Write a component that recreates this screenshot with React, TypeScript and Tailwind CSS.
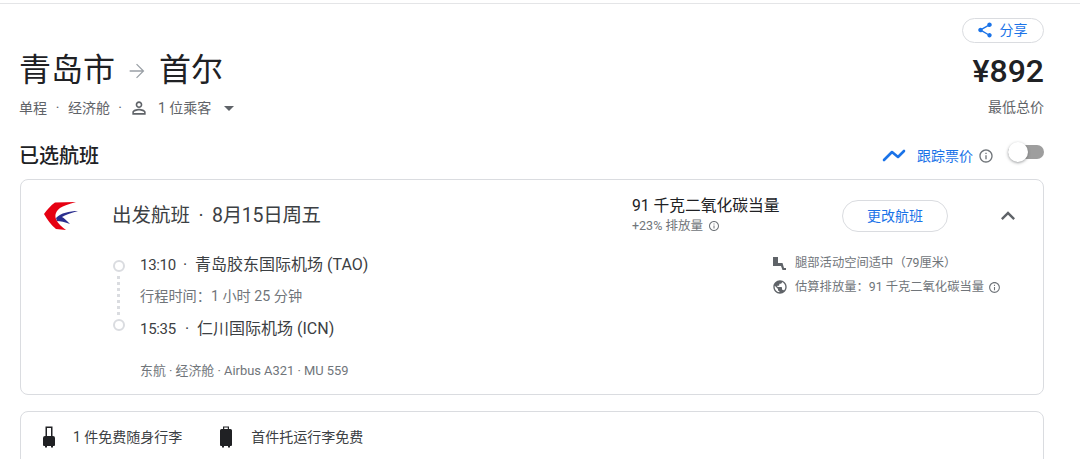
import React from "react";

const font = { fontFamily: '"Roboto","Noto Sans CJK SC",sans-serif' };

function Info({ size = 14, color = "#70757a" }: { size?: number; color?: string }) {
  return (
    <svg width={size} height={size} viewBox="0 0 24 24" fill={color} className="shrink-0">
      <path d="M11 7h2v2h-2zm0 4h2v6h-2zm1-9C6.480 2 2 6.480 2 12s4.480 10 10 10 10-4.480 10-10S17.520 2 12 2zm0 18c-4.410 0-8-3.590-8-8s3.590-8 8-8 8 3.590 8 8-3.590 8-8 8z" />
    </svg>
  );
}

function Logo() {
  return (
    <svg width="36" height="30" viewBox="0 0 36 30" className="-ml-px shrink-0">
      <path d="M0 13C3 9 7 4 11 1.500L32 1C25 3 19 5 16 7 12 10 10.500 14 12 18 14 23 18 26 22 29L12 28C7 24 3 18 0 13Z" fill="#e60012" />
      <path d="M12 17C17 12 25 10 34 10 27 12 21 14 18 16 20 17 23 20 26 23 21 21 16 20 13 20Z" fill="#2b2f8f" />
    </svg>
  );
}

export default function App() {
  return (
    <div style={font} className="h-[459px] w-[1080px] overflow-hidden bg-white pl-5 pr-9 pt-[3px] text-[#202124]">
      <div className="-ml-5 -mr-9 h-px bg-[#e4e5e7]" />
      <div className="flex justify-between pt-[15px]">
        <div className="flex flex-col">
          <div className="mt-[30px] -ml-px flex h-[43px] items-center text-[32px] leading-[43px]">
            <span>青岛市</span>
            <svg width="22" height="22" viewBox="0 0 24 24" fill="#9aa0a6" className="ml-[11px] mr-[11px]">
              <path d="M12 4l-1 1 6.200 6.300H4v1.400h13.200L11 19l1 1 8-8z" />
            </svg>
            <span>首尔</span>
          </div>
          <div className="mt-[6px] -ml-px flex h-5 items-center text-sm leading-5 text-[#5f6368]">
            <span>单程</span>
            <span className="w-[21px] text-center">·</span>
            <span>经济舱</span>
            <span className="w-[20px] text-center">·</span>
            <svg width="20" height="20" viewBox="0 0 24 24" fill="#5f6368" className="ml-[-1px] mr-[9px]">
              <path d="M12 5.900a2.100 2.100 0 1 1 0 4.200 2.100 2.100 0 0 1 0-4.200m0 9c2.970 0 6.100 1.460 6.100 2.100v1.100H5.900V17c0-.64 3.130-2.100 6.100-2.100M12 4C9.790 4 8 5.790 8 8s1.790 4 4 4 4-1.790 4-4-1.790-4-4-4zm0 9c-2.670 0-8 1.340-8 4v3h16v-3c0-2.660-5.330-4-8-4z" />
            </svg>
            <span>1 位乘客</span>
            <svg width="10" height="5" viewBox="0 0 10 5" fill="#5f6368" className="ml-[13px]">
              <path d="M0 0l5 5 5-5z" />
            </svg>
          </div>
        </div>
        <div className="flex flex-col items-end">
          <div className="-mt-px flex h-[25px] w-[82px] items-center justify-center gap-[6px] rounded-full border border-[#dadce0] pb-px text-sm leading-5 text-[#1a73e8]">
            <svg width="18" height="18" viewBox="0 0 24 24" fill="#1a73e8" className="ml-[-3px]">
              <path d="M18 16.080c-.76 0-1.440.3-1.960.77L8.910 12.700c.05-.23.090-.46.090-.7s-.04-.47-.09-.7l7.050-4.110c.54.5 1.250.81 2.040.81 1.660 0 3-1.340 3-3s-1.340-3-3-3-3 1.340-3 3c0 .24.04.47.09.7L8.040 9.810C7.500 9.310 6.790 9 6 9c-1.660 0-3 1.340-3 3s1.340 3 3 3c.79 0 1.500-.31 2.040-.81l7.120 4.160c-.05.21-.08.43-.08.65 0 1.610 1.310 2.920 2.920 2.920s2.920-1.310 2.920-2.920-1.310-2.920-2.920-2.920z" />
            </svg>
            <span>分享</span>
          </div>
          <div className="mt-[8px] text-[32px] font-medium leading-[40px]">¥892</div>
          <div className="mt-[6px] text-sm leading-5 text-[#5f6368]">最低总价</div>
        </div>
      </div>

      <div className="mt-[24px] flex h-7 items-center justify-between">
        <h2 className="-ml-px text-xl leading-7 [font-weight:450]">已选航班</h2>
        <div className="flex items-center">
          <svg width="24" height="24" viewBox="0 0 24 24" fill="none" stroke="#1a73e8" strokeWidth="2.600" strokeLinejoin="round" strokeLinecap="round" className="mr-[11px]">
            <path d="M2 16l8-8 6 5 6-6" />
          </svg>
          <span className="text-sm leading-5 text-[#1a73e8]">跟踪票价</span>
          <span className="ml-[5px] mr-[14px]"><Info size={16} /></span>
          <div className="relative -mt-[9px] h-[14px] w-[36px] rounded-full bg-[#9e9e9e]">
            <div className="absolute left-0 top-[-3px] h-5 w-5 rounded-full bg-white shadow-[0_1px_3px_rgba(60,64,67,0.5)]" />
          </div>
        </div>
      </div>

      <div className="mt-[9px] h-[216px] rounded-lg border border-[#dadce0]">
        <div className="mb-px flex h-[71px] items-center">
          <div className="ml-[24px] w-[68px]"><Logo /></div>
          <div className="-ml-px flex w-[520px] text-[19.5px] leading-6 text-[#3c4043]">
            <span>出发航班</span>
            <span className="w-[22px] text-center">·</span>
            <span className="tracking-[-0.3px]">8月15日周五</span>
          </div>
          <div className="flex w-[210px] flex-col gap-[2px] pb-[2px]">
            <div className="text-[15.75px] leading-5">91 千克二氧化碳当量</div>
            <div className="flex items-center gap-[5px] text-[12.5px] leading-4 text-[#70757a]">
              <span>+23% 排放量</span>
              <Info size={12} />
            </div>
          </div>
          <div className="flex h-8 w-[106px] items-center justify-center rounded-full border border-[#dadce0] text-sm text-[#1a73e8]">更改航班</div>
          <svg width="28" height="28" viewBox="0 0 24 24" fill="#5f6368" className="ml-[46px]">
            <path d="M12 8l-6 6 1.410 1.410L12 10.830l4.590 4.580L18 14z" />
          </svg>
        </div>
        <div className="flex">
          <div className="ml-[91px] mt-[8px] flex w-[13px] flex-col items-center">
            <div className="h-3 w-3 rounded-full border-2 border-[#dadce0]" />
            <div className="my-[4px] h-[39px] border-l-[3px] border-dotted border-[#dadce0]" />
            <div className="h-3 w-3 rounded-full border-2 border-[#dadce0]" />
          </div>
          <div className="ml-[15px] w-[633px]">
            <div className="mt-px flex text-base leading-6 text-[#3c4043]">
              <span className="w-[35px] whitespace-nowrap text-[15px] tracking-[-0.3px]">13:10</span>
              <span className="w-[20px] text-center">·</span>
              <span>青岛胶东国际机场 (TAO)</span>
            </div>
            <div className="mt-[9px] text-[14.2px] leading-5 text-[#70757a]">行程时间：1 小时 25 分钟</div>
            <div className="mt-[11px] flex text-base leading-6 text-[#3c4043]">
              <span className="w-[37px] whitespace-nowrap text-[15px] tracking-[-0.3px]">15:35</span>
              <span className="w-[20px] text-center">·</span>
              <span>仁川国际机场 (ICN)</span>
            </div>
            <div className="mt-[20px] text-[12.9px] leading-5 text-[#70757a]">东航 · 经济舱 · Airbus A321 · MU 559</div>
          </div>
          <div className="flex flex-col gap-[6px] pt-[2px] text-[12.3px] leading-[18px] text-[#70757a]">
            <div className="-ml-px flex items-center gap-[8px]">
              <svg width="15" height="15" viewBox="0 0 15 15" fill="#5f6368">
                <path d="M1 1h5v6h4.500l1.500 5h2v2h-3.500l-1.500-4H1z" />
              </svg>
              <span>腿部活动空间适中（79厘米）</span>
            </div>
            <div className="-ml-px flex items-center gap-[7px]">
              <svg width="16" height="16" viewBox="0 0 24 24" fill="#5f6368">
                <path d="M12 2C6.480 2 2 6.480 2 12s4.480 10 10 10 10-4.480 10-10S17.520 2 12 2zm-1 17.930c-3.950-.49-7-3.850-7-7.930 0-.62.08-1.210.21-1.790L9 15v1c0 1.100.9 2 2 2v1.930zm6.900-2.540c-.26-.81-1-1.390-1.900-1.390h-1v-3c0-.55-.45-1-1-1H8v-2h2c.55 0 1-.45 1-1V7h2c1.100 0 2-.9 2-2v-.41c2.930 1.190 5 4.060 5 7.410 0 2.080-.8 3.970-2.100 5.390z" />
              </svg>
              <span>估算排放量：91 千克二氧化碳当量</span>
              <span className="-ml-[3px]"><Info size={13} /></span>
            </div>
          </div>
        </div>
      </div>

      <div className="mt-4 h-[80px] rounded-lg border border-[#dadce0] pl-[19px] pt-[13px]">
        <div className="flex items-center text-sm leading-6 text-[#3c4043]">
          <svg width="18" height="22" viewBox="0 0 18 22" fill="#202124">
            <path d="M5.500 0.500h7V10h.5a2 2 0 0 1 2 2v7a1 1 0 0 1-1 1h-1v1.500h-2V20H7v1.500H5V20H4a1 1 0 0 1-1-1v-7a2 2 0 0 1 2-2h.5zm1.500 1.500V10h4V2z" />
          </svg>
          <span className="ml-[15px]">1 件免费随身行李</span>
          <svg width="18" height="22" viewBox="0 0 18 22" fill="#202124" className="ml-[35px]">
            <path d="M6 0.500h6V3h1.500A1.500 1.500 0 0 1 15 4.500V19a1 1 0 0 1-1 1h-1v1.500h-2V20H7v1.500H5V20H4a1 1 0 0 1-1-1V4.500A1.500 1.500 0 0 1 4.500 3H6zm1.200 1V3h3.600V1.500z" />
          </svg>
          <span className="ml-[16px]">首件托运行李免费</span>
        </div>
      </div>
    </div>
  );
}
